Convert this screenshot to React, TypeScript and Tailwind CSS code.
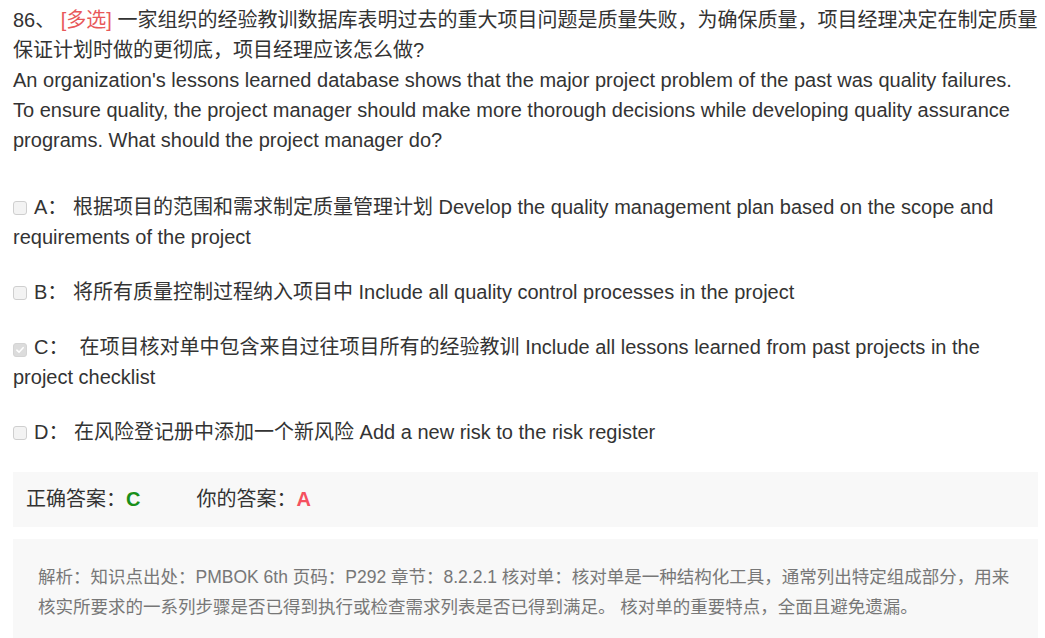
const options = [
  { key: 'A', zh: '根据项目的范围和需求制定质量管理计划', en: 'Develop the quality management plan based on the scope and requirements of the project', checked: false, pad: ' ' },
  { key: 'B', zh: '将所有质量控制过程纳入项目中', en: 'Include all quality control processes in the project', checked: false, pad: ' ' },
  { key: 'C', zh: '在项目核对单中包含来自过往项目所有的经验教训', en: 'Include all lessons learned from past projects in the project checklist', checked: true, pad: '\u00a0 ' },
  { key: 'D', zh: '在风险登记册中添加一个新风险', en: 'Add a new risk to the risk register', checked: false, pad: ' ' },
];

function Box({ checked }: { checked: boolean }) {
  return (
    <span
      className={
        'mr-[7px] inline-flex h-[14px] w-[14px] items-center justify-center rounded-[3px] border align-[-1px] ' +
        (checked ? 'border-[#d4d4d4] bg-[#dcdcdc]' : 'border-[#cfcfcf] bg-[#f3f3f3]')
      }
    >
      {checked && (
        <svg viewBox="0 0 12 12" className="h-[10px] w-[10px]">
          <path d="M2.2 6.2 L4.8 8.6 L9.8 3.2" fill="none" stroke="#fff" strokeWidth="1.8" strokeLinecap="round" strokeLinejoin="round" />
        </svg>
      )}
    </span>
  );
}

export default function App() {
  return (
    <div
      className="min-h-screen bg-white pl-[13px] pr-[7px] pt-[5px] text-[20px] leading-[30px] text-[#333]"
      style={{ fontFamily: '"Liberation Sans", Arial, "Noto Sans CJK SC", sans-serif' }}
    >
      {/* Question */}
      <div>
        86、 <span className="text-[#e8585a]">[多选]</span> 一家组织的经验教训数据库表明过去的重大项目问题是质量失败，为确保质量，项目经理决定在制定质量保证计划时做的更彻底，项目经理应该怎么做?
        <br />
        An organization's lessons learned database shows that the major project problem of the past was quality failures. To ensure quality, the project manager should make more thorough decisions while developing quality assurance programs. What should the project manager do?
      </div>

      {/* Options */}
      <div className="mt-[37px] flex flex-col gap-[25px]">
        {options.map((o) => (
          <div key={o.key}>
            <Box checked={o.checked} />
            {o.key}：{o.pad}{o.zh} {o.en}
          </div>
        ))}
      </div>

      {/* Answer */}
      <div className="mt-[25px] bg-[#f8f8f8] px-[13px] py-[12px] leading-[31px]">
        正确答案：<span className="font-bold text-[#1a8f1a]">C</span>
        <span className="ml-[56px]">你的答案：</span>
        <span className="font-bold text-[#f5515f]">A</span>
      </div>

      {/* Analysis */}
      <div className="mt-[12px] bg-[#f8f8f8] px-[25px] pt-[23px] pb-[23px] text-[17.5px] leading-[30px] text-[#777]">
        解析：知识点出处：PMBOK 6th 页码：P292 章节：8.2.2.1 核对单：核对单是一种结构化工具，通常列出特定组成部分，用来核实所要求的一系列步骤是否已得到执行或检查需求列表是否已得到满足。 核对单的重要特点，全面且避免遗漏。
      </div>
    </div>
  );
}
